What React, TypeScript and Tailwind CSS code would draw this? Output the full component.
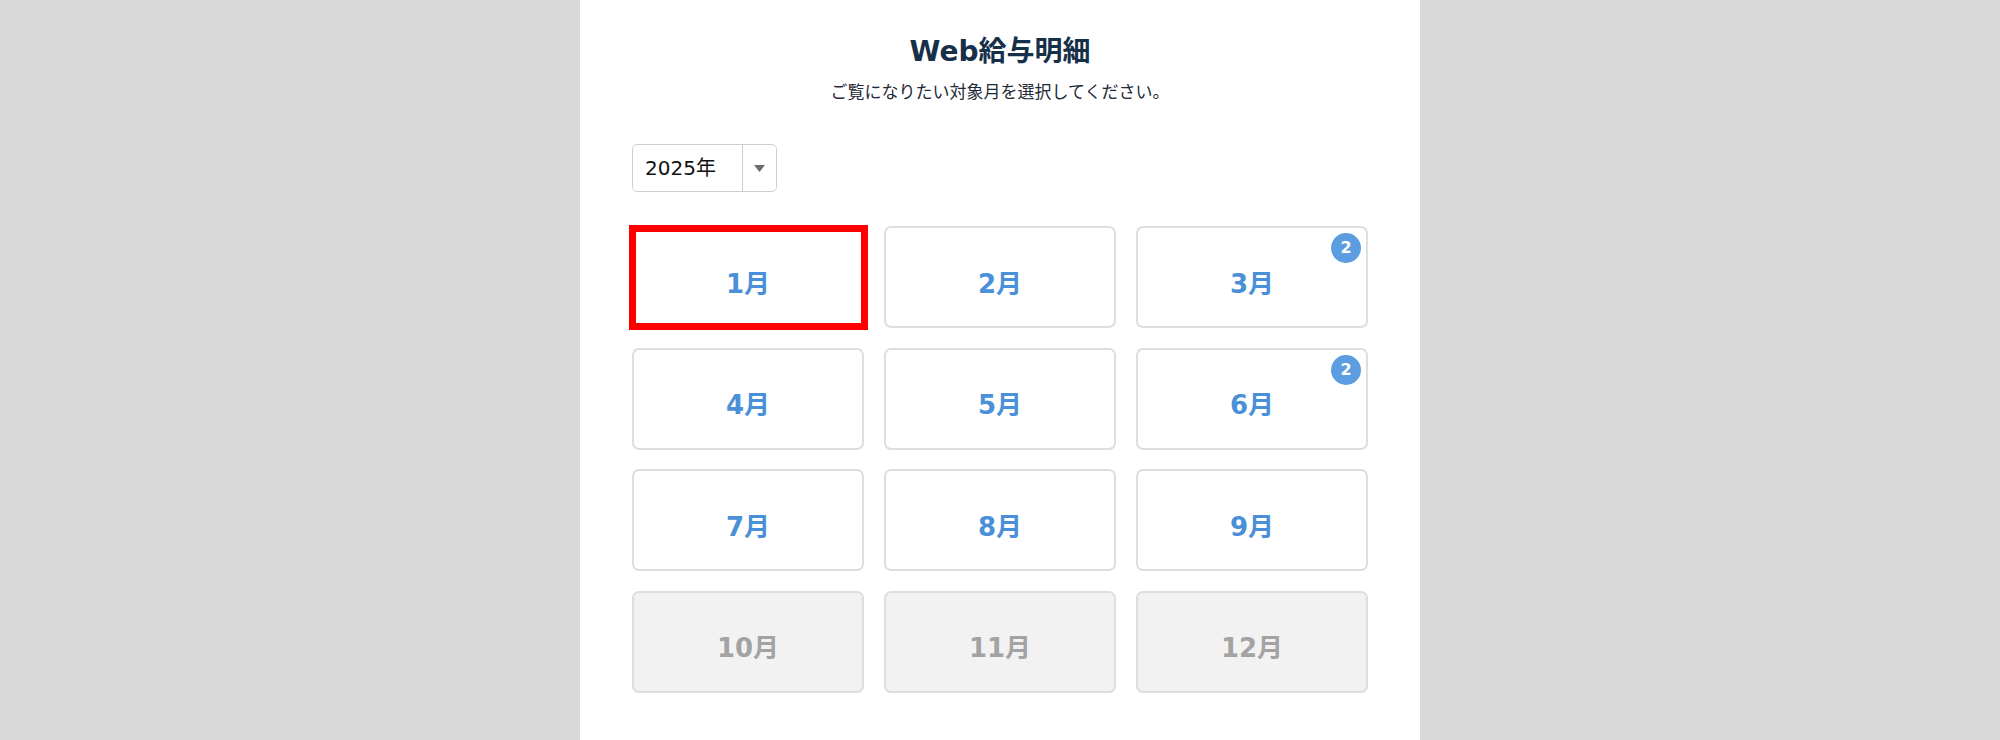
import React from "react";

const months = [
  { m: 1, active: true, badge: 0, highlight: true },
  { m: 2, active: true, badge: 0 },
  { m: 3, active: true, badge: 2 },
  { m: 4, active: true, badge: 0 },
  { m: 5, active: true, badge: 0 },
  { m: 6, active: true, badge: 2 },
  { m: 7, active: true, badge: 0 },
  { m: 8, active: true, badge: 0 },
  { m: 9, active: true, badge: 0 },
  { m: 10, active: false, badge: 0 },
  { m: 11, active: false, badge: 0 },
  { m: 12, active: false, badge: 0 },
];

const font = { fontFamily: '"DejaVu Sans", "Noto Sans CJK JP", sans-serif' };

export default function App() {
  return (
    <div className="min-h-screen w-full bg-[#d9d9d9] flex justify-center" style={font}>
      <div className="w-[840px] min-h-[740px] bg-white px-[52px] pt-[32px]">
        <h1 className="text-center text-[28px] leading-[40px] font-bold text-[#17304a]">Web給与明細</h1>
        <p
          className="mt-[7px] text-center text-[17px] leading-[24px] text-[#1e2a36]"
          style={{ fontFamily: '"Noto Sans CJK JP", sans-serif' }}
        >
          ご覧になりたい対象月を選択してください。
        </p>
        <div className="mt-[41px] flex h-[48px] w-[145px] rounded-[5px] border border-[#cfcfcf] bg-white">
          <div className="flex flex-1 items-center pl-[12px] text-[20px] text-[#111]">2025年</div>
          <div className="w-px bg-[#cfcfcf]" />
          <div className="flex w-[33px] items-center justify-center">
            <svg width="11" height="7" viewBox="0 0 11 7">
              <polygon points="0,0 11,0 5.5,7" fill="#6b6b6b" />
            </svg>
          </div>
        </div>
        <div className="mt-[34px] grid grid-cols-3 gap-x-[20px] gap-y-[19.5px]">
          {months.map((x) => (
            <div
              key={x.m}
              className={
                x.active
                  ? "relative flex h-[102px] items-center justify-center rounded-[7px] border-2 border-[#dedede] bg-white pt-[14px]"
                  : "relative flex h-[102px] items-center justify-center rounded-[7px] border-2 border-[#dedede] bg-[#f2f2f2] pt-[14px]"
              }
            >
              <span
                className={
                  x.active
                    ? "text-[26px] font-bold text-[#4a90d9]"
                    : "text-[26px] font-bold text-[#a3a3a3]"
                }
              >
                {x.m}月
              </span>
              {x.badge > 0 && (
                <span className="absolute right-[5px] top-[5px] flex h-[30px] w-[30px] items-center justify-center rounded-full bg-[#5b9de0] text-[16px] font-bold text-white">
                  {x.badge}
                </span>
              )}
              {x.highlight && (
                <div className="pointer-events-none absolute -left-[5px] -right-[6px] -top-[3px] -bottom-[4px] border-[7px] border-[#ff0000]" />
              )}
            </div>
          ))}
        </div>
      </div>
    </div>
  );
}
